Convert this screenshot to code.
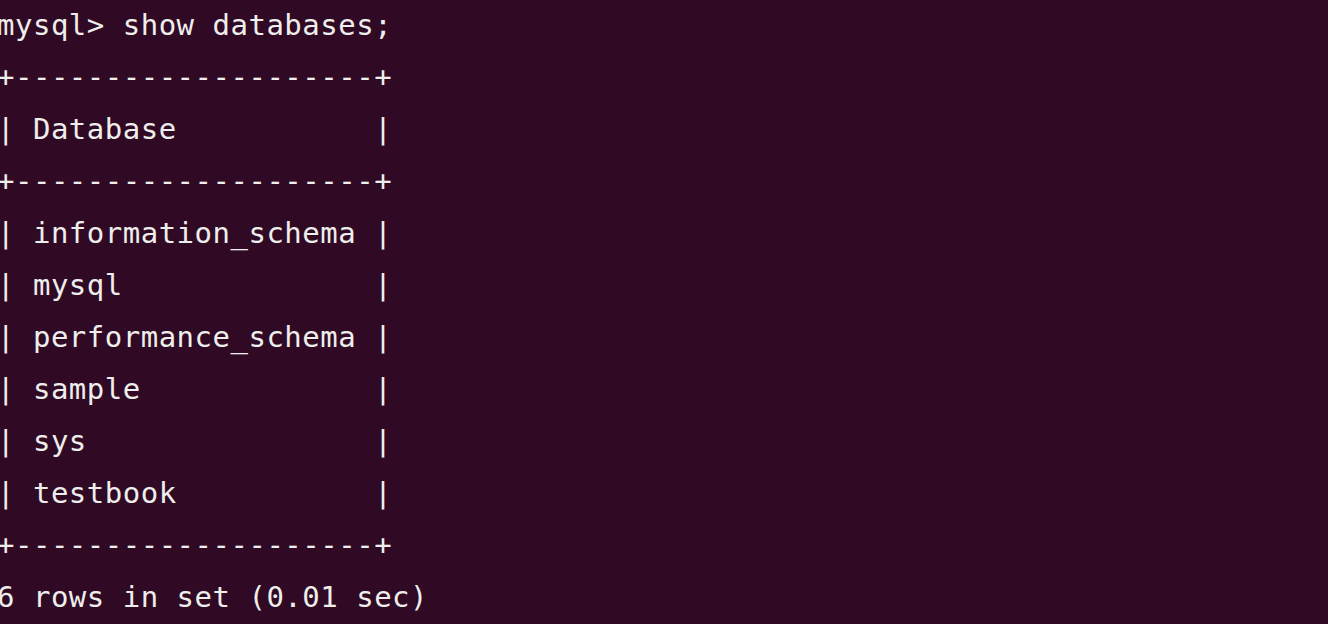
const lines = [
  "mysql> show databases;",
  "+--------------------+",
  "| Database           |",
  "+--------------------+",
  "| information_schema |",
  "| mysql              |",
  "| performance_schema |",
  "| sample             |",
  "| sys                |",
  "| testbook           |",
  "+--------------------+",
  "6 rows in set (0.01 sec)",
];

export default function App() {
  return (
    <div className="w-[1328px] h-[624px] overflow-hidden bg-[#300a24]">
      <div
        className="-mt-[1px] -ml-[3px] text-[29px] leading-[52px] tracking-[0.5px] text-[#eeeeec] whitespace-pre"
        style={{ fontFamily: '"DejaVu Sans Mono", monospace' }}
      >
        {lines.map((line, i) => (
          <div key={i}>{line}</div>
        ))}
      </div>
    </div>
  );
}
